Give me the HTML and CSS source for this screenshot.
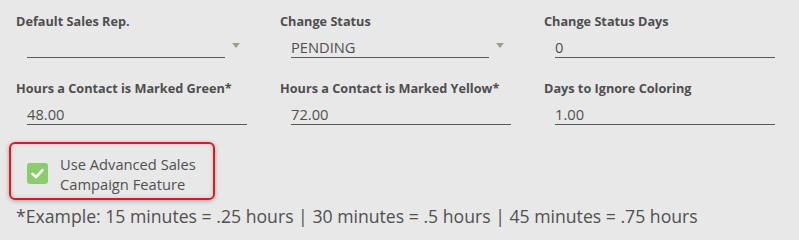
FILE: index.html
```html
<!DOCTYPE html>
<html lang="en">
<head>
<meta charset="utf-8">
<title>Settings</title>
<link rel="stylesheet" href="styles.css">
</head>
<body>
<div class="form">
  <div class="grid">
    <div class="field">
      <label class="label">Default Sales Rep.</label>
      <div class="select-wrap">
        <div class="control select"></div>
        <span class="caret"></span>
      </div>
    </div>
    <div class="field">
      <label class="label">Change Status</label>
      <div class="select-wrap">
        <div class="control select">PENDING</div>
        <span class="caret"></span>
      </div>
    </div>
    <div class="field">
      <label class="label">Change Status Days</label>
      <div class="control input">0</div>
    </div>
    <div class="field">
      <label class="label">Hours a Contact is Marked Green*</label>
      <div class="control input">48.00</div>
    </div>
    <div class="field">
      <label class="label">Hours a Contact is Marked Yellow*</label>
      <div class="control input">72.00</div>
    </div>
    <div class="field">
      <label class="label">Days to Ignore Coloring</label>
      <div class="control input">1.00</div>
    </div>
  </div>
  <div class="check-box">
    <span class="checkbox">
      <svg viewBox="0 0 21 21" width="21" height="21"><path d="M5.5 10.8 L9 14.2 L15.5 7.2" fill="none" stroke="#ffffff" stroke-width="2.6" stroke-linecap="round" stroke-linejoin="round"/></svg>
    </span>
    <span class="check-label">Use Advanced Sales Campaign Feature</span>
  </div>
  <p class="example">*Example: 15 minutes = .25 hours | 30 minutes = .5 hours | 45 minutes = .75 hours</p>
</div>
</body>
</html>
```
FILE: styles.css
```css
html, body {
  margin: 0;
  padding: 0;
  background: #e8e8e8;
}
body {
  font-family: "Open Sans", "Liberation Sans", sans-serif;
  color: #505050;
}
.form {
  padding: 14px 0 0 16px;
}
.grid {
  display: grid;
  grid-template-columns: 264px 264px 264px;
  row-gap: 23px;
}
.label {
  display: block;
  font-size: 12.7px;
  font-weight: 700;
  line-height: 15px;
  color: #4e4e4e;
}
.control {
  margin-left: 11px;
  box-sizing: content-box;
  height: 20px;
  padding-top: 8px;
  font-size: 14.7px;
  line-height: 20px;
  color: #505050;
  border-bottom: 1px solid #5a5a5a;
}
.input {
  width: 220px;
}
.select-wrap {
  display: flex;
  align-items: flex-start;
}
.select {
  width: 198px;
}
.caret {
  width: 0;
  height: 0;
  margin: 14px 0 0 7px;
  border-left: 4px solid transparent;
  border-right: 4px solid transparent;
  border-top: 5px solid #9ba08c;
}
.check-box {
  margin: 17px 0 0 -7px;
  width: 206px;
  height: 58px;
  box-sizing: border-box;
  border: 2px solid #e3141c;
  border-radius: 6px;
  box-shadow: 0 1px 4px rgba(0, 0, 0, 0.3), inset 0 0 5px rgba(0, 0, 0, 0.12);
  display: flex;
  align-items: flex-start;
  padding: 10px 6px 4px 16px;
}
.checkbox {
  flex: none;
  width: 21px;
  height: 21px;
  margin-top: 9px;
  background: #8bcc6b;
  border-radius: 3px;
  display: flex;
}
.check-label {
  margin-left: 12px;
  font-size: 14.7px;
  line-height: 20px;
  color: #505050;
}
.example {
  margin: 4px 0 0 0;
  font-size: 17.65px;
  line-height: 24px;
  color: #505050;
}
```
